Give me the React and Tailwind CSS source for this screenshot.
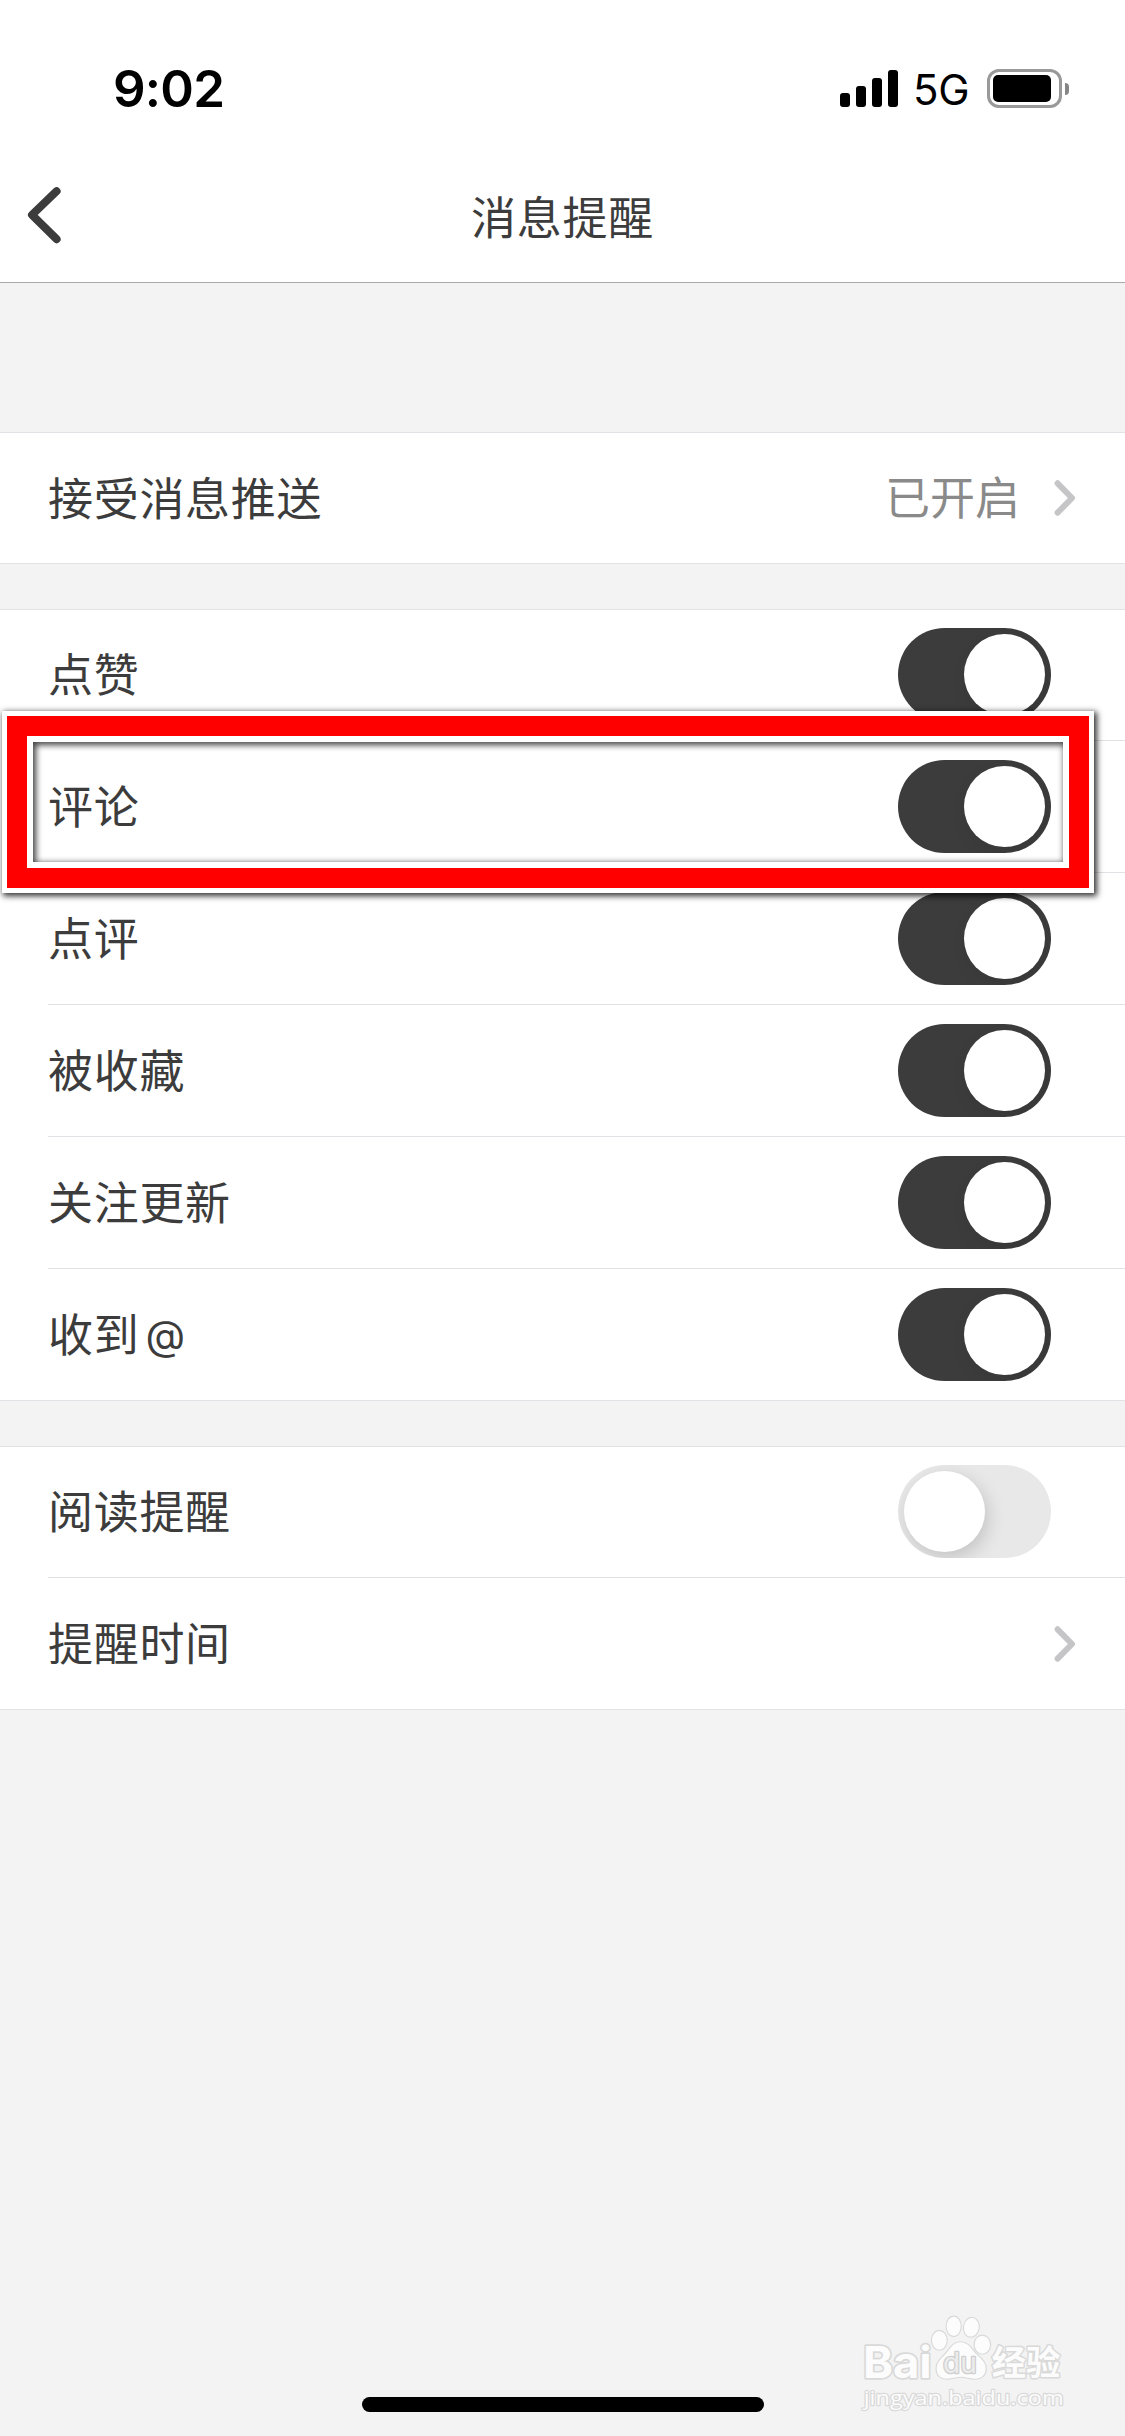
import React, { useState } from "react";

const initialSwitches = [
    { id: "like", label: "点赞", on: true },
    { id: "comment", label: "评论", on: true, highlighted: true },
    { id: "review", label: "点评", on: true },
    { id: "favorite", label: "被收藏", on: true },
    { id: "follow", label: "关注更新", on: true },
    { id: "mention", label: "收到", suffix: "@", on: true },
];

const StatusBar = () => (
    <div className="flex h-[150px] items-start justify-between pl-[113px] pr-[56px] pt-[58px] text-black">
        <span className="text-[51px] leading-[62px] font-semibold tracking-[-0.8px]">9:02</span>
        <div className="flex items-center pt-[11px]">
            <div className="flex h-[37px] items-end gap-[6px]">
                <span className="h-[14px] w-[10px] rounded-[3px] bg-black" />
                <span className="h-[21px] w-[10px] rounded-[3px] bg-black" />
                <span className="h-[29px] w-[10px] rounded-[3px] bg-black" />
                <span className="h-[37px] w-[10px] rounded-[3px] bg-black" />
            </div>
            <span className="ml-[15px] w-[74px] pt-[3px] text-[42px] leading-[36px] tracking-[-0.2px]">5G</span>
            <div className="h-[39px] w-[75px] rounded-[12px] border-[3px] border-[#999999] p-[3px]">
                <div className="h-[27px] w-[58px] rounded-[5px] bg-black" />
            </div>
            <span className="ml-[3px] h-[12px] w-[4px] rounded-r-full bg-[#858585]" />
        </div>
    </div>
);

const NavBar = () => (
    <div className="flex h-[133px] items-center border-b border-[#a9a9ab] pr-[62px] pl-[27px]">
        <button className="w-[35px]" aria-label="返回">
            <svg width="35" height="58" viewBox="0 0 35 58" fill="none">
                <path d="M29.6 4.2 5 27.8 29.6 52.2" stroke="#3c3c3c" strokeWidth="8" strokeLinecap="round" strokeLinejoin="round" />
            </svg>
        </button>
        <h1 className="flex-1 pt-[5px] text-center text-[45px] leading-[60px] tracking-[0.7px]">消息提醒</h1>
    </div>
);

const Chevron = () => (
    <svg className="mr-[49px]" width="22" height="36" viewBox="0 0 22 36" fill="none">
        <path d="M3.6 3.3 18 18 3.6 32.7" stroke="#c5c5c7" strokeWidth="6" strokeLinecap="round" strokeLinejoin="round" />
    </svg>
);

const Toggle = ({ on, onClick }) => (
    <button
        role="switch"
        aria-checked={on}
        onClick={onClick}
        className={`mr-[74px] flex h-[93px] w-[153px] overflow-hidden rounded-full p-[6px] ${on ? "justify-end bg-[#3c3c3c]" : "justify-start bg-[#e8e8e8]"}`}
    >
        <span
            className={`h-[81px] w-[81px] rounded-full bg-white ${on ? "shadow-[3px_6px_18px_rgba(0,0,0,0.08)]" : "shadow-[3px_6px_18px_rgba(0,0,0,0.16)]"}`}
        />
    </button>
);

// Frame drawn over the row that needs attention
const Highlight = () => (
    <div className="pointer-events-none absolute -top-[30px] left-[2px] z-10 h-[182px] w-[1092px] border-[5.5px] border-white shadow-[2px_2px_6px_1px_rgba(0,0,0,0.8)]">
        <div className="h-full w-full border-[20px] border-[#ff0000]">
            <div className="h-full w-full border-[6px] border-white">
                <div className="h-full w-full shadow-[inset_2px_2px_6px_1px_rgba(0,0,0,0.75)]" />
            </div>
        </div>
    </div>
);

const Section = ({ children }) => (
    <div className="border-y border-[#e2e2e6] bg-white">{children}</div>
);

const Row = ({ label, suffix, first, last, highlighted, children }) => (
    <div className={`relative pl-[48px] ${highlighted ? "z-10" : ""}`}>
        <div
            className={`flex items-center justify-between ${first ? "h-[131px]" : "h-[132px]"} ${last ? "-mb-px pb-px" : "border-b border-[#e2e2e6]"} ${first && !last ? "pb-px" : ""}`}
        >
            <div className="flex items-center pt-[3px] text-[45px] leading-[60px] tracking-[0.7px]">
                <span>{label}</span>
                {suffix && <span className="ml-[6px] pb-[3px] text-[41px]">{suffix}</span>}
            </div>
            <div className="flex items-center">{children}</div>
        </div>
        {highlighted && <Highlight />}
    </div>
);

const Watermark = () => (
    <svg
        className="absolute right-[57px] bottom-[22px]"
        width="210"
        height="104"
        viewBox="99 90 630 312"
        fill="#fcfcfc"
        stroke="#d9d9d9"
        strokeWidth="5"
        paintOrder="stroke"
        strokeLinejoin="round"
    >
        <text x="114" y="293" fontSize="132" fontWeight="700" fontFamily="Inter, sans-serif" textLength="206" lengthAdjust="spacingAndGlyphs" strokeWidth="10">Bai</text>
        <g strokeWidth="7">
            <ellipse cx="343" cy="181" rx="22" ry="28" />
            <ellipse cx="386" cy="139" rx="21" ry="29" />
            <ellipse cx="439" cy="142" rx="22" ry="28" transform="rotate(8 439 142)" />
            <ellipse cx="472" cy="194" rx="23" ry="27" />
            <path d="M406 187C430 187 441 209 454 223C468 237 482 246 482 266C482 285 468 297 449 296C433 295 424 290 408 290C392 290 383 295 368 296C348 297 335 285 335 266C335 246 348 237 361 223C374 209 383 187 406 187Z" />
        </g>
        <text x="354" y="280" fontSize="84" fontFamily="Inter, sans-serif" textLength="101" lengthAdjust="spacingAndGlyphs" stroke="#cfcfcf" strokeWidth="8" fill="#ececec">du</text>
        <text x="500" y="285" fontSize="103" fontWeight="700" fontFamily="'Noto Sans CJK SC', sans-serif" strokeWidth="9">经验</text>
        <text x="116" y="375" fontSize="62" fontFamily="'Open Sans', 'Noto Sans', sans-serif" textLength="600" lengthAdjust="spacingAndGlyphs" strokeWidth="7">jingyan.baidu.com</text>
    </svg>
);

const App = () => {
    const [switches, setSwitches] = useState(initialSwitches);
    const [reading, setReading] = useState(false);

    const toggle = (id) => {
        setSwitches(switches.map((item) => (item.id === id ? { ...item, on: !item.on } : item)));
    };

    return (
        <div className="relative flex h-[2436px] w-[1125px] flex-col overflow-hidden bg-[#f3f3f3] font-[Inter,'Noto_Sans_CJK_SC',sans-serif] text-[#3c3c3c]">
            <header className="bg-white">
                <StatusBar />
                <NavBar />
            </header>

            <main className="flex flex-col gap-[45px] pt-[149px]">
                <Section>
                    <Row label="接受消息推送" first last>
                        <span className="mr-[34px] pt-[2px] text-[45px] leading-[60px] text-[#8a8a8a]">已开启</span>
                        <Chevron />
                    </Row>
                </Section>

                <Section>
                    {switches.map((item, index) => (
                        <Row
                            key={item.id}
                            label={item.label}
                            suffix={item.suffix}
                            first={index === 0}
                            last={index === switches.length - 1}
                            highlighted={item.highlighted}
                        >
                            <Toggle on={item.on} onClick={() => toggle(item.id)} />
                        </Row>
                    ))}
                </Section>

                <Section>
                    <Row label="阅读提醒" first>
                        <Toggle on={reading} onClick={() => setReading(!reading)} />
                    </Row>
                    <Row label="提醒时间" last>
                        <Chevron />
                    </Row>
                </Section>
            </main>

            <Watermark />
            <div className="mx-auto mt-auto mb-[24px] h-[15px] w-[402px] rounded-full bg-black" />
        </div>
    );
};

export default App;
